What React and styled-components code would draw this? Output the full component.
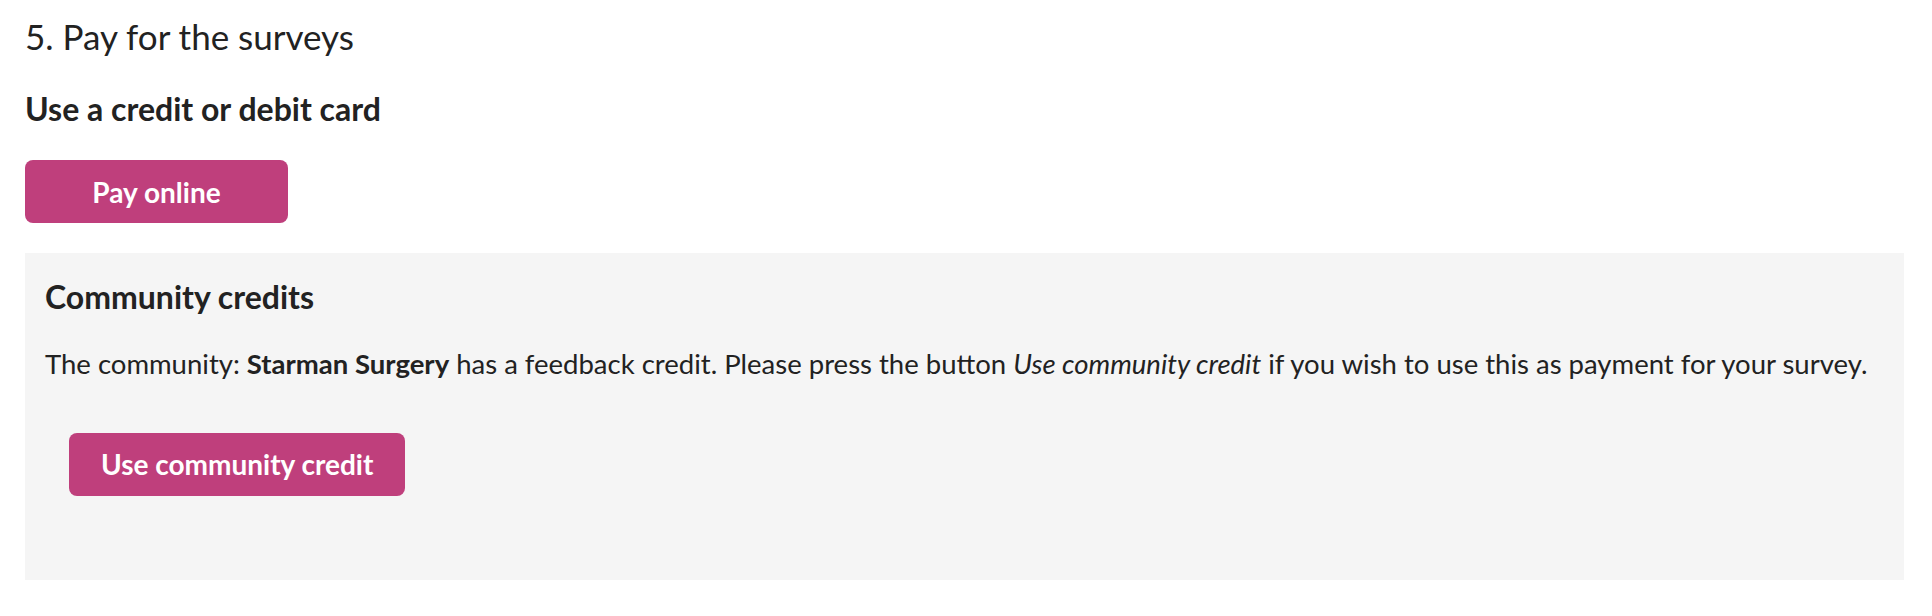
import React from "react";
import styled, { createGlobalStyle } from "styled-components";

const GlobalStyle = createGlobalStyle`
  html, body {
    margin: 0;
    padding: 0;
    background: #fff;
  }
  body {
    font-family: Lato, "Open Sans", "Liberation Sans", sans-serif;
    color: #222;
  }
`;

const Page = styled.div`
  padding: 15px 28px 20px 25px;
`;

const StepTitle = styled.h2`
  margin: 0;
  font-size: 35px;
  font-weight: 400;
  line-height: 1.2;
  color: #222;
`;

const SubTitle = styled.h4`
  margin: ${({ $top }) => $top || 0}px 0 0;
  font-size: 32px;
  font-weight: 700;
  line-height: 1.2;
  color: #222;
`;

const PinkButton = styled.button`
  display: inline-flex;
  align-items: center;
  justify-content: center;
  box-sizing: border-box;
  height: 63px;
  min-width: ${({ $minWidth }) => $minWidth || 0}px;
  padding: 0 32px;
  border: none;
  border-radius: 8px;
  background: #bf3f7c;
  color: #fff;
  font-family: inherit;
  font-size: 28px;
  font-weight: 700;
  cursor: pointer;
`;

const ButtonRow = styled.div`
  margin-top: ${({ $top }) => $top}px;
  padding-left: ${({ $indent }) => $indent || 0}px;
`;

const CreditPanel = styled.section`
  margin-top: 30px;
  background: #f5f5f5;
  padding: 25px 20px 84px;
`;

const Paragraph = styled.p`
  margin: 30px 0 0;
  font-size: 27.5px;
  line-height: 1.2;
  color: #222;
`;

export default function App() {
  return (
    <>
      <GlobalStyle />
      <Page>
        <StepTitle>5. Pay for the surveys</StepTitle>
        <SubTitle $top={33}>Use a credit or debit card</SubTitle>
        <ButtonRow $top={32}>
          <PinkButton $minWidth={263}>Pay online</PinkButton>
        </ButtonRow>
        <CreditPanel>
          <SubTitle>Community credits</SubTitle>
          <Paragraph>
            The community: <strong>Starman Surgery</strong> has a feedback
            credit. Please press the button <em>Use community credit</em> if
            you wish to use this as payment for your survey.
          </Paragraph>
          <ButtonRow $top={53} $indent={24}>
            <PinkButton>Use community credit</PinkButton>
          </ButtonRow>
        </CreditPanel>
      </Page>
    </>
  );
}
